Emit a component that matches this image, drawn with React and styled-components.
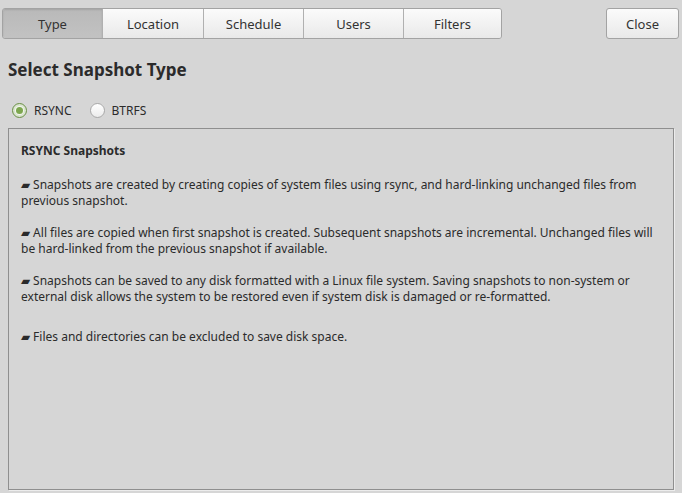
import React, { useState } from "react";
import styled, { createGlobalStyle } from "styled-components";

const Global = createGlobalStyle`
  html, body { margin: 0; padding: 0; background: #d6d6d6; }
  body { font-family: "Noto Sans", "Open Sans", sans-serif; color: #2b2b2b; }
  * { box-sizing: border-box; }
`;

const Page = styled.div`
  width: 682px;
  height: 493px;
  display: flex;
  flex-direction: column;
  padding: 8px 3px 3px 2px;
  overflow: hidden;
`;

const TopBar = styled.div`
  display: flex;
  justify-content: space-between;
  align-items: flex-start;
`;

const Tabs = styled.div`
  display: flex;
  border: 1px solid #a3a3a3;
  border-radius: 3px;
  overflow: hidden;
  height: 31px;
`;

const Tab = styled.button`
  width: ${(p) => p.$w}px;
  height: 100%;
  border: none;
  border-left: ${(p) => (p.$first ? "none" : "1px solid #b0b0b0")};
  font: 13px "Noto Sans", "Open Sans", sans-serif;
  color: #333;
  padding: 0;
  background: ${(p) =>
    p.$active
      ? "linear-gradient(#b9b9b9, #c2c2c2)"
      : "linear-gradient(#fbfbfb, #e9e9e9)"};
  box-shadow: ${(p) => (p.$active ? "inset 0 1px 2px rgba(0,0,0,0.12)" : "none")};
`;

const CloseButton = styled.button`
  width: 73px;
  height: 31px;
  border: 1px solid #a3a3a3;
  border-radius: 3px;
  background: linear-gradient(#fbfbfb, #e9e9e9);
  font: 13px "Noto Sans", "Open Sans", sans-serif;
  color: #333;
  padding: 0;
`;

const Body = styled.div`
  flex: 1;
  display: flex;
  flex-direction: column;
  padding: 0 5px 0 6px;
`;

const Title = styled.h1`
  margin: 19px 0 0 0;
  font-size: 17px;
  font-weight: 700;
  line-height: 24px;
  color: #2b2b2b;
`;

const RadioRow = styled.div`
  display: flex;
  align-items: center;
  gap: 18px;
  margin: 20px 0 0 4px;
  height: 16px;
`;

const RadioLabel = styled.label`
  display: flex;
  align-items: center;
  gap: 7px;
  font-size: 12px;
  color: #2b2b2b;
`;

const RadioDot = styled.span`
  width: 15px;
  height: 15px;
  border-radius: 50%;
  border: 1px solid ${(p) => (p.$on ? "#6a8f45" : "#a9a9a9")};
  background: ${(p) => (p.$on ? "#d9e4cf" : "linear-gradient(#ffffff, #ececec)")};
  display: flex;
  align-items: center;
  justify-content: center;
  &::after {
    content: "";
    width: 7px;
    height: 7px;
    border-radius: 50%;
    background: ${(p) => (p.$on ? "#7da74f" : "transparent")};
    box-shadow: ${(p) => (p.$on ? "0 0 0 1px #f4f7f0" : "none")};
  }
`;

const InfoBox = styled.div`
  flex: 1;
  margin-top: 10px;
  border: 1px solid #8f8f8f;
  box-shadow: 1px 1px 0 #ececec;
  background: #d6d6d6;
  padding: 14px 12px 0 12px;
  font-size: 12px;
  line-height: 16px;
  color: #2b2b2b;
`;

const BoxTitle = styled.div`
  font-weight: 700;
  margin-bottom: 18px;
`;

const Para = styled.p`
  margin: ${(p) => (p.$extra ? "24px" : "0")} 0 16px 0;
`;

const tabs = [
  ["Type", 99],
  ["Location", 101],
  ["Schedule", 100],
  ["Users", 100],
  ["Filters", 98],
];

export default function App() {
  const [active] = useState("Type");
  return (
    <>
      <Global />
      <Page>
        <TopBar>
          <Tabs>
            {tabs.map(([t, w], i) => (
              <Tab key={t} $w={w} $first={i === 0} $active={t === active}>
                {t}
              </Tab>
            ))}
          </Tabs>
          <CloseButton>Close</CloseButton>
        </TopBar>
        <Body>
          <Title>Select Snapshot Type</Title>
          <RadioRow>
            <RadioLabel>
              <RadioDot $on />
              RSYNC
            </RadioLabel>
            <RadioLabel>
              <RadioDot />
              BTRFS
            </RadioLabel>
          </RadioRow>
          <InfoBox>
            <BoxTitle>RSYNC Snapshots</BoxTitle>
            <Para>
              ▰ Snapshots are created by creating copies of system files using rsync, and hard-linking unchanged files from previous snapshot.
            </Para>
            <Para>
              ▰ All files are copied when first snapshot is created. Subsequent snapshots are incremental. Unchanged files will be hard-linked from the previous snapshot if available.
            </Para>
            <Para>
              ▰ Snapshots can be saved to any disk formatted with a Linux file system. Saving snapshots to non-system or external disk allows the system to be restored even if system disk is damaged or re-formatted.
            </Para>
            <Para $extra>▰ Files and directories can be excluded to save disk space.</Para>
          </InfoBox>
        </Body>
      </Page>
    </>
  );
}
